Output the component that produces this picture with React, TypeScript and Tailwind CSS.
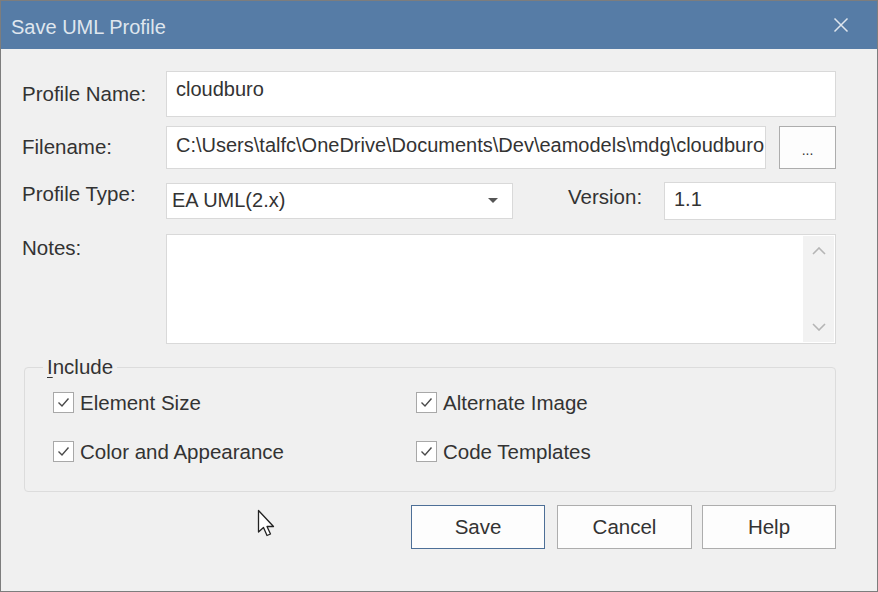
import React from "react";

const font = { fontFamily: '"Liberation Sans", Arial, sans-serif' };

function Check({ label }: { label: string }) {
  return (
    <div className="flex items-center gap-[6px]">
      <div className="w-[21px] h-[21px] border border-[#a8a8a8] bg-white flex items-center justify-center">
        <svg width="15" height="15" viewBox="0 0 15 15">
          <path d="M2.5 7.5 L6 11 L12.5 3.5" fill="none" stroke="#4a4a4a" strokeWidth="1.4" />
        </svg>
      </div>
      <span className="text-[20.5px] leading-none text-[#333] mt-[1px]">{label}</span>
    </div>
  );
}

export default function App() {
  return (
    <div
      className="w-[878px] h-[592px] bg-[#f0f0f0] border border-[#7d7d7d] flex flex-col relative overflow-hidden"
      style={font}
    >
      {/* Title bar */}
      <div className="h-[48px] bg-[#567ca6] flex items-center justify-between pl-[10px] pr-[28px] shrink-0">
        <span className="text-[20px] text-[#dfe6ee] mt-[3px]">Save UML Profile</span>
        <svg width="16" height="16" viewBox="0 0 16 16">
          <path d="M1.5 1.5 L14.5 14.5 M14.5 1.5 L1.5 14.5" stroke="#dfe6ee" strokeWidth="1.5" />
        </svg>
      </div>

      <div className="flex flex-col pl-[21px] pr-[41px] text-[#333]">
        {/* Profile Name */}
        <div className="flex items-center mt-[22px]">
          <span className="w-[144px] text-[20.5px]">Profile Name:</span>
          <div className="flex-1 h-[46px] bg-white border border-[#d9d9d9] px-[9px] pt-[2px] text-[20px]">
            cloudburo
          </div>
        </div>

        {/* Filename */}
        <div className="flex items-center mt-[9px]">
          <span className="w-[144px] text-[20.5px]">Filename:</span>
          <div className="w-[600px] h-[43px] bg-white border border-[#d9d9d9] px-[9px] pb-[5px] flex items-center text-[20px] whitespace-nowrap overflow-hidden">
            C:\Users\talfc\OneDrive\Documents\Dev\eamodels\mdg\cloudburo
          </div>
          <div className="ml-auto w-[57px] h-[43px] bg-[#fdfdfd] border border-[#adadad] flex items-center justify-center text-[14px] pt-[6px]">
            ...
          </div>
        </div>

        {/* Profile Type / Version */}
        <div className="flex items-center mt-[13px]">
          <span className="w-[144px] text-[20.5px] -mt-[14px]">Profile Type:</span>
          <div className="w-[347px] h-[36px] bg-white border border-[#d9d9d9] pl-[5px] pr-[14px] pb-[2px] flex items-center justify-between text-[20px]">
            <span>EA UML(2.x)</span>
            <svg width="10" height="6" viewBox="0 0 10 6" className="mt-[2px]">
              <path d="M0 0 L10 0 L5 5 Z" fill="#555" />
            </svg>
          </div>
          <span className="ml-[55px] text-[20.5px] -mt-[8px]">Version:</span>
          <div className="ml-auto w-[172px] h-[38px] bg-white border border-[#d9d9d9] px-[9px] pb-[4px] flex items-center text-[20px]">
            1.1
          </div>
        </div>

        {/* Notes */}
        <div className="flex items-start mt-[14px]">
          <span className="w-[144px] text-[20.5px] -mt-[1px]">Notes:</span>
          <div className="flex-1 h-[110px] bg-white border border-[#d9d9d9] flex justify-end p-[1px]">
            <div className="w-[31px] h-full bg-[#f2f2f2] flex flex-col items-center justify-between py-[11px]">
              <svg width="14" height="8" viewBox="0 0 14 8">
                <path d="M1 7 L7 1 L13 7" fill="none" stroke="#b5b5b5" strokeWidth="1.6" />
              </svg>
              <svg width="14" height="8" viewBox="0 0 14 8">
                <path d="M1 1 L7 7 L13 1" fill="none" stroke="#b5b5b5" strokeWidth="1.6" />
              </svg>
            </div>
          </div>
        </div>

        {/* Include group */}
        <fieldset className="mt-[11px] ml-[2px] border border-[#dcdcdc] rounded-[4px] h-[137px]">
          <legend className="ml-[18px] px-[4px] text-[20.5px] leading-[24px]">
            <span className="underline underline-offset-[3px] decoration-[1px]">I</span>nclude
          </legend>
          <div className="grid grid-cols-[363px_1fr] gap-y-[27px] mt-[13px] pl-[28px]">
            <Check label="Element Size" />
            <Check label="Alternate Image" />
            <Check label="Color and Appearance" />
            <Check label="Code Templates" />
          </div>
        </fieldset>

        {/* Buttons */}
        <div className="flex justify-end mt-[13px]">
          <button className="w-[134px] h-[44px] bg-[#fdfdfd] border border-[#4d6f97] text-[20.5px] text-[#333]">
            Save
          </button>
          <button className="ml-[12px] w-[135px] h-[44px] bg-[#fdfdfd] border border-[#adadad] text-[20.5px] text-[#333]">
            Cancel
          </button>
          <button className="ml-[10px] w-[134px] h-[44px] bg-[#fdfdfd] border border-[#adadad] text-[20.5px] text-[#333]">
            Help
          </button>
        </div>
      </div>

      {/* Mouse cursor */}
      <svg
        className="absolute left-[256px] top-[508px]"
        width="22"
        height="32"
        viewBox="0 0 22 32"
      >
        <path
          d="M1.5 1.5 L1.5 23 L6.5 18.5 L10 26.5 L13.5 25 L10 17.5 L16.5 17.5 Z"
          fill="#fff"
          stroke="#222"
          strokeWidth="1.3"
          strokeLinejoin="round"
        />
      </svg>
    </div>
  );
}
